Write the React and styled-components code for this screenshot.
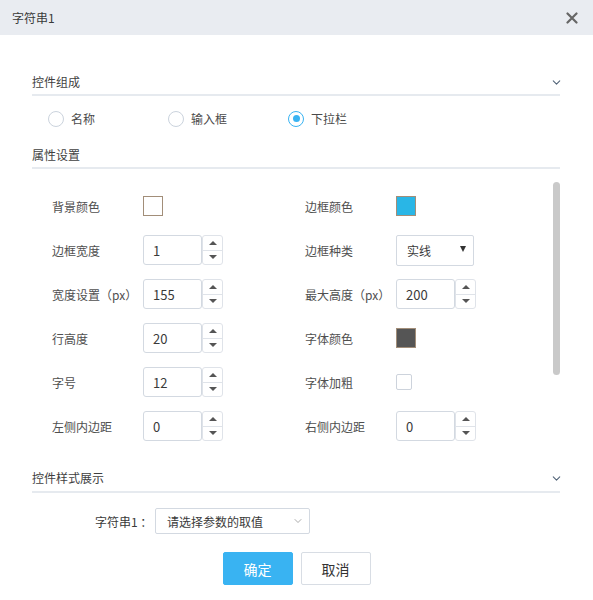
import React from "react";
import styled, { createGlobalStyle } from "styled-components";
import { ChevronDown } from "lucide-react";

const GlobalStyle = createGlobalStyle`
  html, body { margin: 0; padding: 0; background: #fff; }
  body { font-family: "Noto Sans CJK SC", "Noto Sans", sans-serif; color: #444; }
  * { box-sizing: border-box; }
`;

const Dialog = styled.div`
  width: 593px;
  height: 600px;
  background: #fff;
  display: flex;
  flex-direction: column;
`;

const Header = styled.div`
  height: 35px;
  flex: none;
  background: #e9ecf1;
  display: flex;
  align-items: center;
  justify-content: space-between;
  padding: 0 14px 0 12px;
`;

const Title = styled.div`
  font-size: 12px;
  color: #3a3a3a;
  line-height: 20px;
`;

const CloseBtn = styled.button`
  border: 0;
  background: transparent;
  padding: 0;
  width: 14px;
  height: 14px;
  display: flex;
  align-items: center;
  justify-content: center;
  cursor: pointer;
`;

const Body = styled.div`
  padding: 37px 33px 0 32px;
`;

const SectionHeader = styled.div`
  display: flex;
  align-items: center;
  justify-content: space-between;
  font-size: 12px;
  color: #3f3f3f;
  line-height: 20px;
  padding-top: ${(p) => p.$top || 0}px;
  padding-bottom: ${(p) => p.$bottom ?? 2}px;
  border-bottom: 2px solid #e6eaef;
  & > svg {
    margin-right: -3px;
  }
`;

const RadioRow = styled.div`
  height: 45px;
  display: flex;
  align-items: center;
  padding-left: 16px;
`;

const RadioItem = styled.label`
  width: 120px;
  display: flex;
  align-items: center;
  gap: 7px;
  font-size: 12px;
  color: #4a4a4a;
  cursor: pointer;
`;

const RadioCircle = styled.span`
  width: 16px;
  height: 16px;
  border-radius: 50%;
  border: ${(p) => (p.$checked ? "1.5px solid #39b3f2" : "1px solid #cbd3dd")};
  display: flex;
  align-items: center;
  justify-content: center;
  background: #fff;
  &::after {
    content: "";
    width: 7px;
    height: 7px;
    border-radius: 50%;
    background: ${(p) => (p.$checked ? "#39b3f2" : "transparent")};
  }
`;

const PropsArea = styled.div`
  position: relative;
  height: 283px;
  overflow: hidden;
  padding-top: 15px;
`;

const ScrollThumb = styled.div`
  position: absolute;
  right: 0;
  top: 13px;
  width: 7px;
  height: 193px;
  border-radius: 4px;
  background: #c9c9c9;
`;

const PropGrid = styled.div`
  display: grid;
  grid-template-columns: 253px 1fr;
  grid-auto-rows: 44px;
`;

const Field = styled.div`
  display: flex;
  align-items: center;
  padding-left: 20px;
`;

const FieldLabel = styled.div`
  width: 91px;
  font-size: 12px;
  color: #4f4f4f;
  white-space: nowrap;
`;

const Swatch = styled.div`
  width: 20px;
  height: 20px;
  border: 1px solid #a28e79;
  background: ${(p) => p.$color};
`;

const Spinner = styled.div`
  display: flex;
  height: 30px;
`;

const NumBox = styled.div`
  width: 59px;
  height: 30px;
  border: 1px solid #d3d9e1;
  border-radius: 3px;
  display: flex;
  align-items: center;
  padding-left: 9px;
  font-size: 13px;
  color: #3a3a3a;
`;

const SpinBtns = styled.div`
  width: 21px;
  height: 30px;
  border: 1px solid #dfe3e9;
  border-radius: 3px;
  display: flex;
  flex-direction: column;
`;

const SpinHalf = styled.div`
  flex: 1;
  display: flex;
  align-items: center;
  justify-content: center;
  & + & {
    border-top: 1px solid #dfe3e9;
  }
  &::after {
    content: "";
    width: 0;
    height: 0;
    border-left: 4px solid transparent;
    border-right: 4px solid transparent;
    ${(p) =>
      p.$up
        ? "border-bottom: 4px solid #555;"
        : "border-top: 4px solid #555;"}
  }
`;

const LineSelect = styled.div`
  width: 78px;
  height: 31px;
  border: 1px solid #d3d9e1;
  border-radius: 2px;
  display: flex;
  align-items: center;
  justify-content: space-between;
  padding: 0 7px 0 10px;
  font-size: 12px;
  color: #3a3a3a;
  &::after {
    content: "";
    width: 0;
    height: 0;
    border-left: 3.5px solid transparent;
    border-right: 3.5px solid transparent;
    border-top: 6px solid #333;
    margin-top: -3px;
  }
`;

const CheckBox = styled.div`
  width: 16px;
  height: 16px;
  border: 1px solid #cdd3dc;
  border-radius: 2px;
  background: #fff;
`;

const PreviewRow = styled.div`
  display: flex;
  align-items: center;
  padding: 15px 0 0 63px;
`;

const PreviewLabel = styled.div`
  font-size: 12px;
  color: #3a3a3a;
  width: 60px;
  white-space: nowrap;
`;

const PreviewSelect = styled.div`
  width: 155px;
  height: 26px;
  border: 1px solid #d3d9e1;
  border-radius: 2px;
  display: flex;
  align-items: center;
  justify-content: space-between;
  padding: 0 5px 0 11px;
  font-size: 12px;
  color: #3a3a3a;
`;

const ButtonRow = styled.div`
  display: flex;
  justify-content: center;
  gap: 8px;
  margin-top: 18px;
  margin-left: -32px;
  margin-right: -33px;
`;

const Button = styled.button`
  width: 70px;
  height: 33px;
  border-radius: 2px;
  font-family: inherit;
  font-size: 14px;
  cursor: pointer;
  border: 1px solid ${(p) => (p.$primary ? "#39b3f2" : "#d8dde4")};
  background: ${(p) => (p.$primary ? "#39b3f2" : "#fff")};
  color: ${(p) => (p.$primary ? "#fff" : "#333")};
`;

function NumberSpinner({ value }) {
  return (
    <Spinner>
      <NumBox>{value}</NumBox>
      <SpinBtns>
        <SpinHalf $up />
        <SpinHalf />
      </SpinBtns>
    </Spinner>
  );
}

const rows = [
  [
    { label: "背景颜色", type: "color", value: "#ffffff" },
    { label: "边框颜色", type: "color", value: "#29b6e6" },
  ],
  [
    { label: "边框宽度", type: "number", value: "1" },
    { label: "边框种类", type: "select", value: "实线" },
  ],
  [
    { label: "宽度设置（px）", type: "number", value: "155" },
    { label: "最大高度（px）", type: "number", value: "200" },
  ],
  [
    { label: "行高度", type: "number", value: "20" },
    { label: "字体颜色", type: "color", value: "#555555" },
  ],
  [
    { label: "字号", type: "number", value: "12" },
    { label: "字体加粗", type: "check" },
  ],
  [
    { label: "左侧内边距", type: "number", value: "0" },
    { label: "右侧内边距", type: "number", value: "0" },
  ],
];

function Control({ f }) {
  if (f.type === "color") return <Swatch $color={f.value} />;
  if (f.type === "number") return <NumberSpinner value={f.value} />;
  if (f.type === "select") return <LineSelect>{f.value}</LineSelect>;
  return <CheckBox />;
}

export default function App() {
  const radios = [
    { label: "名称", checked: false },
    { label: "输入框", checked: false },
    { label: "下拉栏", checked: true },
  ];
  return (
    <>
      <GlobalStyle />
      <Dialog>
        <Header>
          <Title>字符串1</Title>
          <CloseBtn aria-label="close">
            <svg width="12" height="12" viewBox="0 0 12 12">
              <path d="M1.5 1.5 L10.5 10.5 M10.5 1.5 L1.5 10.5" stroke="#666" strokeWidth="2.2" strokeLinecap="round" />
            </svg>
          </CloseBtn>
        </Header>
        <Body>
          <SectionHeader>
            <span>控件组成</span>
            <ChevronDown size={13} color="#4f6176" strokeWidth={1.9} />
          </SectionHeader>
          <RadioRow>
            {radios.map((r) => (
              <RadioItem key={r.label}>
                <RadioCircle $checked={r.checked} />
                {r.label}
              </RadioItem>
            ))}
          </RadioRow>
          <SectionHeader $top={4}>
            <span>属性设置</span>
          </SectionHeader>
          <PropsArea>
            <PropGrid>
              {rows.map((row) =>
                row.map((f) => (
                  <Field key={f.label}>
                    <FieldLabel>{f.label}</FieldLabel>
                    <Control f={f} />
                  </Field>
                ))
              )}
            </PropGrid>
            <ScrollThumb />
          </PropsArea>
          <SectionHeader $top={16} $bottom={3}>
            <span>控件样式展示</span>
            <ChevronDown size={13} color="#4f6176" strokeWidth={1.9} />
          </SectionHeader>
          <PreviewRow>
            <PreviewLabel>字符串1 ：</PreviewLabel>
            <PreviewSelect>
              <span>请选择参数的取值</span>
              <ChevronDown size={12} color="#888" strokeWidth={1.4} />
            </PreviewSelect>
          </PreviewRow>
          <ButtonRow>
            <Button $primary>确定</Button>
            <Button>取消</Button>
          </ButtonRow>
        </Body>
      </Dialog>
    </>
  );
}
